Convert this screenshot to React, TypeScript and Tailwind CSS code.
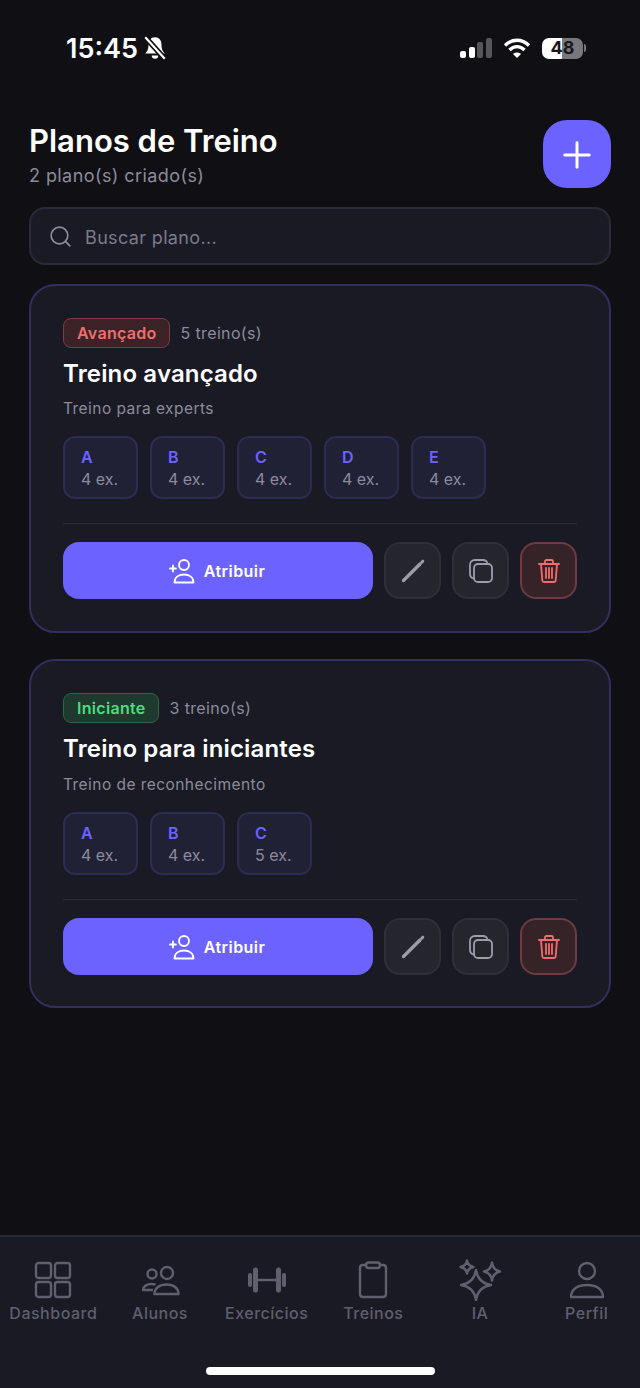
import React from 'react';
import { Plus, Search } from 'lucide-react';

interface Plan {
  level: string;
  levelClass: string;
  count: string;
  title: string;
  description: string;
  descriptionClass: string;
  days: { letter: string; exercises: string }[];
}

const plans: Plan[] = [
  {
    level: 'Avançado',
    levelClass: 'bg-[#3a2226] border-[#7a3d42] text-[#f26d6d]',
    count: '5 treino(s)',
    title: 'Treino avançado',
    description: 'Treino para experts',
    descriptionClass: 'mt-[8px]',
    days: [
      { letter: 'A', exercises: '4 ex.' },
      { letter: 'B', exercises: '4 ex.' },
      { letter: 'C', exercises: '4 ex.' },
      { letter: 'D', exercises: '4 ex.' },
      { letter: 'E', exercises: '4 ex.' },
    ],
  },
  {
    level: 'Iniciante',
    levelClass: 'bg-[#1e3a2e] border-[#2f6548] text-[#4ade80]',
    count: '3 treino(s)',
    title: 'Treino para iniciantes',
    description: 'Treino de reconhecimento',
    descriptionClass: 'mt-[9px]',
    days: [
      { letter: 'A', exercises: '4 ex.' },
      { letter: 'B', exercises: '4 ex.' },
      { letter: 'C', exercises: '5 ex.' },
    ],
  },
];

const StatusBar = () => (
  <div className="flex h-[96px] items-center justify-between pl-[66px] pr-[54px] text-white">
    <div className="flex items-center gap-[5px]">
      <span className="text-[27px] font-semibold leading-none">15:45</span>
      <svg width="24" height="26" viewBox="0 0 22 24" fill="#fff">
        <path d="M11 2c-4 0-6 3-6 7 0 4-1 6-3 8h18c-2-2-3-4-3-8 0-4-2-7-6-7z" />
        <path d="M8 19h6a3 3 0 0 1-6 0z" />
        <path d="M2 2l18 20" stroke="#0f0f14" strokeWidth="5" />
        <path d="M2 2l18 20" stroke="#fff" strokeWidth="2" />
      </svg>
    </div>
    <div className="flex items-center gap-[11px]">
      <svg width="32" height="22" viewBox="0 0 32 22">
        <rect x="0" y="14" width="6" height="7" rx="2" fill="#fff" />
        <rect x="9" y="10" width="6" height="11" rx="2" fill="#fff" />
        <rect x="17" y="5" width="6" height="16" rx="2" fill="#55555a" />
        <rect x="26" y="1" width="6" height="20" rx="2" fill="#55555a" />
      </svg>
      <svg width="28" height="22" viewBox="0 0 28 22" fill="none" stroke="#fff" strokeWidth="3.4">
        <path d="M2 8.5c7-7 17-7 24 0" />
        <path d="M6.5 13c4.5-4.5 10.500-4.500 15 0" />
        <path d="M14 21l-4-4c2.200-2 5.800-2 8 0z" fill="#fff" stroke="none" />
      </svg>
      <div className="flex items-center gap-[1px]">
        <div className="flex h-[21px] w-[41px] items-center justify-center rounded-[7px] bg-[linear-gradient(90deg,#ffffff_0%,#ffffff_48%,#77777c_48%,#77777c_100%)] text-[18px] font-bold leading-none text-[#17171c]">
          48
        </div>
        <div className="h-[8px] w-[2px] rounded-r-full bg-[#77777c]" />
      </div>
    </div>
  </div>
);

const PenIcon = () => (
  <svg width="26" height="26" viewBox="0 0 26 26" fill="none" stroke="#9c9cac" strokeLinecap="round">
    <path d="M3.500 22.500L20 6" strokeWidth="3.400" />
    <path d="M21.800 4.200l1-1" strokeWidth="3" />
  </svg>
);

const CopyIcon = () => (
  <svg width="26" height="26" viewBox="0 0 26 26" fill="none" stroke="#9c9cac" strokeWidth="1.800">
    <rect x="6" y="6" width="18" height="18" rx="4" />
    <path d="M6 20.500c-2.500-.5-4-2-4-4.500V7c0-3 2-5 5-5h8c2.500 0 4 1 4.500 4" />
  </svg>
);

const TrashIcon = () => (
  <svg width="22" height="26" viewBox="0 0 22 26" fill="none" stroke="#f26d6d" strokeWidth="1.800" strokeLinecap="round">
    <path d="M1 6h20" />
    <path d="M7 6V3.500C7 2.500 7.700 2 8.500 2h5c.8 0 1.500.5 1.500 1.500V6" />
    <path d="M3 6l1.300 16.500c.1 1 .9 1.500 1.700 1.500h10c.8 0 1.600-.5 1.700-1.500L19 6" />
    <path d="M8 10v10M11 10v10M14 10v10" />
  </svg>
);

const AssignIcon = () => (
  <svg width="26" height="26" viewBox="0 0 26 26" fill="none" stroke="#fff" strokeWidth="1.800" strokeLinecap="round">
    <circle cx="15" cy="7" r="5" />
    <path d="M5.500 24.500c0-5 4-8 9.500-8s9.500 3 9.500 8z" strokeLinejoin="round" />
    <path d="M1 10.500h6M4 7.500v6" />
  </svg>
);

const PlanCard = ({ plan }: { plan: Plan }) => (
  <div className="flex h-[349px] flex-col rounded-[26px] border-2 border-[#322e5e] bg-[#1a1a24] px-[32px] pt-[32px]">
    <div className="flex items-center gap-[11px]">
      <span
        className={`flex h-[30px] items-center rounded-[8px] border pl-[13px] pr-[12px] text-[16px] font-semibold leading-none tracking-[0.3px] ${plan.levelClass}`}
      >
        {plan.level}
      </span>
      <span className="text-[16px] leading-none tracking-[0.35px] text-[#8b8b9c]">{plan.count}</span>
    </div>
    <h2 className="mt-[10px] text-[24px] font-semibold leading-[32px] tracking-[0.15px] text-white">{plan.title}</h2>
    <p className={`${plan.descriptionClass} text-[15.500px] leading-[22px] tracking-[0.45px] text-[#8b8b9c]`}>{plan.description}</p>
    <div className="mt-[16px] flex gap-[12px]">
      {plan.days.map((day) => (
        <div
          key={day.letter}
          className="flex h-[63px] w-[75px] flex-col justify-center rounded-[12px] border-2 border-[#2c2b50] bg-[#212136] pl-[16px] pt-[2px]"
        >
          <span className="text-[16px] font-semibold leading-[21px] text-[#6c63ff]">{day.letter}</span>
          <span className="text-[16px] leading-[22px] text-[#8b8b9c]">{day.exercises}</span>
        </div>
      ))}
    </div>
    <div className="mt-[24px] h-[1px] bg-[#2b2b36]" />
    <div className="mt-[18px] flex gap-[11px]">
      <button className="flex h-[57px] w-[310px] items-center justify-center gap-[9px] rounded-[16px] bg-[#6c63ff] pr-[2px] text-[16px] font-semibold tracking-[0.45px] text-white">
        <AssignIcon />
        Atribuir
      </button>
      <button className="flex h-[57px] w-[57px] items-center justify-center rounded-[16px] border-2 border-[#2f2f3a] bg-[#25252e]">
        <PenIcon />
      </button>
      <button className="flex h-[57px] w-[57px] items-center justify-center rounded-[16px] border-2 border-[#2f2f3a] bg-[#25252e]">
        <CopyIcon />
      </button>
      <button className="flex h-[57px] w-[57px] items-center justify-center rounded-[16px] border-2 border-[#6e3b41] bg-[#352327]">
        <TrashIcon />
      </button>
    </div>
  </div>
);

const navColor = '#5f5f6e';

const navItems: { label: string; icon: React.ReactNode }[] = [
  {
    label: 'Dashboard',
    icon: (
      <svg width="38" height="38" viewBox="0 0 38 38" fill="none" stroke={navColor} strokeWidth="2.400">
        <rect x="2" y="2" width="15" height="15" rx="2.500" />
        <rect x="21" y="2" width="15" height="15" rx="2.500" />
        <rect x="2" y="21" width="15" height="15" rx="2.500" />
        <rect x="21" y="21" width="15" height="15" rx="2.500" />
      </svg>
    ),
  },
  {
    label: 'Alunos',
    icon: (
      <svg width="40" height="38" viewBox="0 0 40 38" fill="none" stroke={navColor} strokeWidth="2.400" strokeLinejoin="round">
        <circle cx="12" cy="13" r="4.500" />
        <circle cx="27" cy="12" r="6" />
        <path d="M13 29H3c0-3.500 3.500-6 8.500-6 1.500 0 2.800.2 4 .7" />
        <path d="M14.500 33c0-6 5-9.500 12-9.500s12 3.500 12 9.500z" />
      </svg>
    ),
  },
  {
    label: 'Exercícios',
    icon: (
      <svg width="40" height="38" viewBox="0 0 40 38" fill="none" stroke={navColor} strokeLinecap="round">
        <path d="M10 19h20" strokeWidth="2.600" />
        <path d="M8.500 9v20M31.500 9v20" strokeWidth="5" />
        <path d="M3 14v10M37 14v10" strokeWidth="4" />
      </svg>
    ),
  },
  {
    label: 'Treinos',
    icon: (
      <svg width="30" height="38" viewBox="0 0 30 38" fill="none" stroke={navColor} strokeWidth="2.400" strokeLinejoin="round">
        <path d="M8 4H5C3 4 2 5.500 2 7v26c0 2 1.500 3 3 3h20c1.500 0 3-1 3-3V7c0-1.500-1-3-3-3h-3" />
        <rect x="8" y="1.500" width="14" height="5.500" rx="2.700" />
      </svg>
    ),
  },
  {
    label: 'IA',
    icon: (
      <svg width="42" height="42" viewBox="0 0 42 42" fill="none" stroke={navColor} strokeWidth="2.400" strokeLinejoin="round">
        <path d="M17 11Q19 24 32 26Q19 28 17 41Q15 28 2 26Q15 24 17 11z" />
        <path d="M8 1.500Q9 7 14.500 8Q9 9 8 14.500Q7 9 1.500 8Q7 7 8 1.500z" />
        <path d="M33 3.500Q34 11 41 12.500Q34 14 33 21.500Q32 14 25 12.500Q32 11 33 3.500z" />
      </svg>
    ),
  },
  {
    label: 'Perfil',
    icon: (
      <svg width="36" height="38" viewBox="0 0 36 38" fill="none" stroke={navColor} strokeWidth="2.400" strokeLinejoin="round">
        <circle cx="18" cy="10" r="8" />
        <path d="M2 36c0-8 7-12 16-12s16 4 16 12z" />
      </svg>
    ),
  },
];

const App = () => {
  return (
    <div className="flex h-[1388px] w-[640px] flex-col overflow-hidden bg-[#0f0f14] font-['Inter',sans-serif]">
      <StatusBar />
      <main className="flex flex-col px-[29px] pt-[24px]">
        <div className="flex h-[68px] items-start justify-between">
          <div className="pt-[2px]">
            <h1 className="text-[31px] font-semibold leading-[38px] text-white">Planos de Treino</h1>
            <p className="mt-[3px] text-[18px] leading-[26px] tracking-[0.42px] text-[#8b8b9c]">2 plano(s) criado(s)</p>
          </div>
          <button className="flex h-[68px] w-[68px] items-center justify-center rounded-[24px] bg-[#6c63ff] pt-[1px]">
            <Plus size={42} color="#fff" strokeWidth={1.7} />
          </button>
        </div>
        <div className="mt-[19px] flex h-[58px] items-center gap-[12px] rounded-[16px] border-2 border-[#2a2a3a] bg-[#1a1a24] pl-[17px]">
          <Search size={25} color="#8b8b9c" strokeWidth={1.6} />
          <span className="pt-[3px] text-[18px] tracking-[0.35px] text-[#7a7a8c]">Buscar plano...</span>
        </div>
        <div className="mt-[19px] flex flex-col gap-[26px]">
          {plans.map((plan) => (
            <PlanCard key={plan.title} plan={plan} />
          ))}
        </div>
      </main>
      <nav className="relative mt-auto flex h-[153px] border-t-2 border-[#2a2a36] bg-[#1a1a24] pt-[24px]">
        {navItems.map((item) => (
          <div key={item.label} className="flex flex-1 flex-col items-center">
            <div className="flex h-[38px] items-center justify-center">{item.icon}</div>
            <span className="mt-[4px] text-[16px] font-medium leading-[20px] tracking-[0.5px] text-[#5f5f6e]">{item.label}</span>
          </div>
        ))}
        <div className="absolute bottom-[13px] left-[206px] h-[8px] w-[229px] rounded-full bg-white" />
      </nav>
    </div>
  );
};

export default App;
